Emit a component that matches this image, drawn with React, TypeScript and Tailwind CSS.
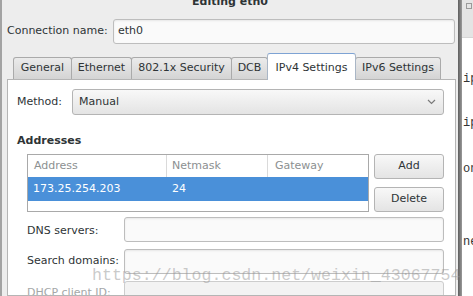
import React from "react";

const inputCls =
  "rounded-[3px] border border-[#bdbdbd] bg-[#fafafa] shadow-[inset_0_1px_2px_rgba(0,0,0,0.08)]";
const btnCls =
  "rounded-[3px] border border-[#b4b4b4] bg-gradient-to-b from-[#f8f8f8] to-[#e4e4e4] flex items-center text-[#2e3436]";
const tabCls =
  "h-[22px] border border-b-0 border-[#aaaaaa] rounded-t-[3px] bg-gradient-to-b from-[#ebebeb] to-[#d4d4d4] flex items-center justify-center whitespace-nowrap";

export default function App() {
  return (
    <div className="relative w-[473px] h-[296px] overflow-hidden flex bg-white text-[11px] text-[#2e3436] font-['DejaVu_Sans',sans-serif]">
      {/* Dialog */}
      <div className="w-[458px] h-full shrink-0 bg-[#ededed] border-l-2 border-[#a3a3a3] flex flex-col overflow-hidden">
        <div className="h-[19px] shrink-0 flex justify-center">
          <span className="font-bold leading-[13px] -mt-[5px]">Editing eth0</span>
        </div>
        <div className="h-[25px] shrink-0 flex items-center pl-[5px]">
          <div className="w-[106px]">Connection name:</div>
          <div className={`w-[342px] h-full flex items-center pl-[4px] ${inputCls}`}>eth0</div>
        </div>

        {/* Tabs */}
        <div className="mt-[9px] h-[26px] shrink-0 pl-[11px] flex items-end relative z-10">
          <div className={`w-[59px] ${tabCls}`}>General</div>
          <div className={`w-[61px] -ml-px ${tabCls}`}>Ethernet</div>
          <div className={`w-[101px] -ml-px ${tabCls}`}>802.1x Security</div>
          <div className={`w-[37px] -ml-px ${tabCls}`}>DCB</div>
          <div className="w-[89px] -ml-px h-[27px] -mb-px relative z-10 bg-white border border-b-0 border-[#a9b6c6] border-t-[#7ea3d4] rounded-t-[3px] flex items-center justify-center pt-[3px] whitespace-nowrap">
            IPv4 Settings
          </div>
          <div className={`w-[86px] -ml-px ${tabCls}`}>IPv6 Settings</div>
        </div>

        {/* Panel */}
        <div className="ml-[5px] w-[449px] flex-1 min-h-0 overflow-hidden bg-white border border-[#b5b5b5] pt-[9px]">
          <div className="h-[26px] pl-[9px] flex items-center">
            <div className="w-[55px]">Method:</div>
            <div className={`w-[372px] h-full pl-[6px] pr-[7px] justify-between ${btnCls}`}>
              <span>Manual</span>
              <svg width="9" height="6" viewBox="0 0 9 6" className="text-[#7a7a7a]">
                <path d="M1 1 L4.5 4.5 L8 1" fill="none" stroke="currentColor" strokeWidth="1.2" />
              </svg>
            </div>
          </div>

          <div className="mt-[19px] pl-[9px] font-bold leading-[13px]">Addresses</div>

          <div className="mt-[7px] pl-[19px] flex gap-[5px]">
            <div className="w-[342px] h-[58px] border border-[#a9a9a9] bg-white flex flex-col">
              <div className="h-[22px] shrink-0 flex items-center text-[#8c9091]">
                <div className="w-[138px] pl-[6px]">Address</div>
                <div className="w-[101px] h-full border-l border-[#dadada] pl-[5px] flex items-center">Netmask</div>
                <div className="flex-1 h-full border-l border-[#dadada] pl-[7px] flex items-center">Gateway</div>
              </div>
              <div className="h-[24px] shrink-0 bg-[#4a90d9] text-white flex items-center">
                <div className="w-[138px] pl-[5px]">173.25.254.203</div>
                <div className="w-[101px] pl-[6px]">24</div>
              </div>
            </div>
            <div className="w-[70px] flex flex-col gap-[8px]">
              <div className={`h-[25px] justify-center ${btnCls}`}>Add</div>
              <div className={`h-[25px] justify-center ${btnCls}`}>Delete</div>
            </div>
          </div>

          <div className="mt-[5px] pl-[19px] h-[25px] flex items-center">
            <div className="w-[97px] pt-[4px]">DNS servers:</div>
            <div className={`w-[320px] h-full ${inputCls}`} />
          </div>
          <div className="mt-[7px] pl-[19px] h-[25px] flex items-center">
            <div className="w-[97px]">Search domains:</div>
            <div className={`w-[320px] h-full ${inputCls}`} />
          </div>
          <div className="mt-[7px] pl-[19px] h-[25px] flex items-center">
            <div className="w-[97px] text-[#a4a7a8]">DHCP client ID:</div>
            <div className="w-[320px] h-full rounded-[3px] border border-[#cdcdcd] bg-[#f3f3f3]" />
          </div>
        </div>
      </div>

      {/* Window edge */}
      <div className="w-[4px] h-full shrink-0 bg-gradient-to-r from-[#5e5e5e] to-[#9a9a9a]" />

      {/* Background window */}
      <div className="flex-1 h-full flex flex-col bg-white font-['Liberation_Mono',monospace] text-[12px] leading-[14px] text-[#333]">
        <div className="h-[38px] shrink-0 bg-[#e4e4e4] pt-[3px] pl-[4px] border-b border-[#d6d6d6]">
          <div className="w-[6px] h-[6px] border border-[#9a9a9a]" />
        </div>
        <div className="shrink-0 pl-[1px] mt-[34px]">ip</div>
        <div className="shrink-0 pl-[1px] mt-[30px]">ip</div>
        <div className="shrink-0 pl-[1px] mt-[32px]">on</div>
        <div className="shrink-0 pl-[1px] mt-[59px]">ne</div>
      </div>

      {/* Watermark */}
      <div className="absolute left-[92px] top-[267px] whitespace-nowrap pointer-events-none font-['Liberation_Mono',monospace] text-[16.6px] leading-[17px] text-[rgba(150,150,150,0.5)]">
        https://blog.csdn.net/weixin_43067754
      </div>
    </div>
  );
}
